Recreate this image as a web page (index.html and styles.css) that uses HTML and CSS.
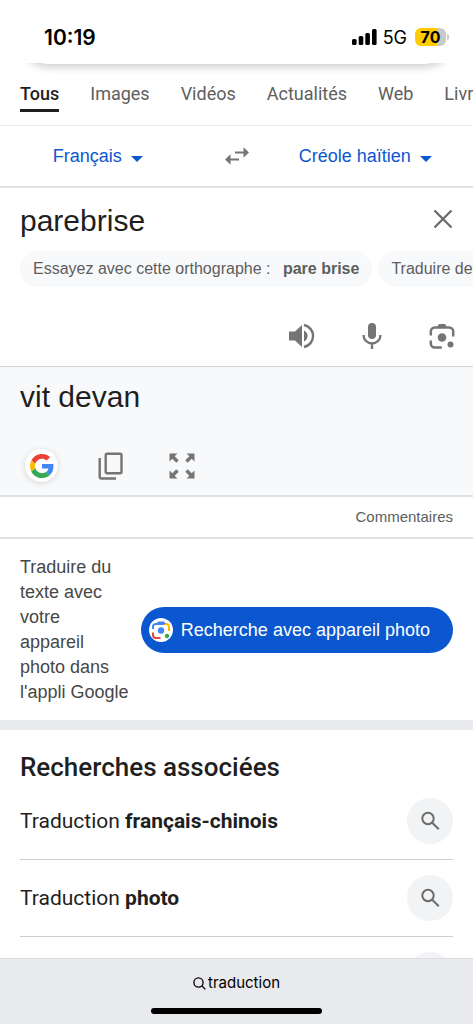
FILE: index.html
```html
<!DOCTYPE html>
<html lang="fr">
<head>
<meta charset="utf-8">
<meta name="viewport" content="width=device-width, initial-scale=1">
<title>traduction</title>
<link rel="stylesheet" href="styles.css">
</head>
<body>
<div class="screen">
  <header class="status">
    <time class="clock">10:19</time>
    <div class="indicators">
      <svg class="signal" viewBox="0 0 25 16" width="25" height="16" aria-hidden="true"><rect x="0" y="10" width="4.600" height="6" rx="1.5"/><rect x="6.7" y="7" width="4.6" height="9" rx="1.5"/><rect x="13.3" y="4" width="4.6" height="12" rx="1.5"/><rect x="20" y="0" width="4.6" height="16" rx="1.5"/></svg>
      <span class="network">5G</span>
      <span class="battery">70</span>
      <span class="battery-tip"></span>
    </div>
  </header>

  <div class="tabs-area">
    <div class="search-edge"></div>
    <nav class="tabs">
      <a class="tab active" href="#">Tous</a>
      <a class="tab" href="#">Images</a>
      <a class="tab" href="#">Vidéos</a>
      <a class="tab" href="#">Actualités</a>
      <a class="tab" href="#">Web</a>
      <a class="tab" href="#">Livres</a>
    </nav>
  </div>

  <main>
    <section class="languages">
      <div class="language">
        <select class="language-select" aria-label="Langue source"><option>Français</option></select>
        <svg viewBox="0 0 12 6" width="12" height="6" aria-hidden="true"><path d="M0 0h12L6 6z"/></svg>
      </div>
      <button class="icon-button" aria-label="Inverser les langues">
        <svg viewBox="0 0 26 20" width="26" height="20" aria-hidden="true"><path d="M11 5.400h8.500V1.200L25 6.500l-5.500 5.300V7.600H11zM15 12.400H6.500V8.200L1 13.500l5.500 5.300v-4.200H15z"/></svg>
      </button>
      <div class="language target-language">
        <select class="language-select" aria-label="Langue cible"><option>Créole haïtien</option></select>
        <svg viewBox="0 0 12 6" width="12" height="6" aria-hidden="true"><path d="M0 0h12L6 6z"/></svg>
      </div>
    </section>

    <section class="source">
      <div class="source-row">
        <input class="source-text" type="text" value="parebrise" aria-label="Texte à traduire">
        <button class="icon-button clear" aria-label="Effacer">
          <svg viewBox="0 0 20 20" width="20" height="20" aria-hidden="true"><path d="M1.500 1.500l17 17M18.500 1.500l-17 17" fill="none" stroke="#6b6b6b" stroke-width="2.300"/></svg>
        </button>
      </div>
      <div class="chips">
        <button class="chip">Essayez avec cette orthographe : <b>pare brise</b></button>
        <button class="chip">Traduire depuis</button>
      </div>
      <div class="source-tools">
        <button class="icon-button" aria-label="Écouter">
          <svg viewBox="0 0 26 26" width="26" height="26" aria-hidden="true"><path d="M0 8.500h6L13 2v22l-7-6.500H0z"/><path d="M15 7.500a6 6 0 0 1 0 11z"/><path d="M15 2a11.200 11.200 0 0 1 0 22" fill="none" stroke="#757575" stroke-width="2.400"/></svg>
        </button>
        <button class="icon-button" aria-label="Saisie vocale">
          <svg viewBox="0 0 26 26" width="26" height="26" aria-hidden="true"><rect x="9" y="0" width="8" height="16" rx="4"/><path d="M4.500 12a8.500 8.500 0 0 0 17 0M13 20.500V26" fill="none" stroke="#757575" stroke-width="2.300"/></svg>
        </button>
        <button class="icon-button" aria-label="Recherche par image">
          <svg viewBox="0 0 26 26" width="26" height="26" aria-hidden="true"><path d="M1.800 12.500V8.500a4 4 0 0 1 4-4h14.400a4 4 0 0 1 4 4v5M1.800 17.500V20.500a4 4 0 0 0 4 4h7" fill="none" stroke="#757575" stroke-width="2.500"/><path d="M8 4l2-3h6l2 3z"/><circle cx="13" cy="14.500" r="4.300"/><circle cx="21.500" cy="21.500" r="3"/></svg>
        </button>
      </div>
    </section>

    <section class="result">
      <p class="result-text">vit devan</p>
      <div class="result-tools">
        <button class="google-button" aria-label="Google">
          <svg viewBox="0 0 48 48" width="24" height="24" aria-hidden="true"><path fill="#ea4335" d="M24 9.500c3.540 0 6.710 1.220 9.210 3.600l6.850-6.850C35.900 2.380 30.470 0 24 0 14.620 0 6.510 5.380 2.560 13.220l7.980 6.190C12.430 13.720 17.740 9.500 24 9.500z"/><path fill="#4285f4" d="M46.980 24.550c0-1.570-.15-3.090-.38-4.550H24v9.020h12.940c-.58 2.960-2.260 5.480-4.780 7.180l7.730 6c4.510-4.180 7.090-10.360 7.090-17.650z"/><path fill="#fbbc05" d="M10.530 28.590A14.500 14.500 0 0 1 9.770 24c0-1.600.27-3.140.76-4.590l-7.980-6.190A23.900 23.900 0 0 0 0 24c0 3.880.92 7.540 2.560 10.780z"/><path fill="#34a853" d="M24 48c6.480 0 11.930-2.130 15.890-5.810l-7.730-6c-2.150 1.450-4.920 2.300-8.160 2.300-6.260 0-11.570-4.220-13.470-9.910l-7.980 6.190C6.510 42.620 14.620 48 24 48z"/></svg>
        </button>
        <button class="icon-button" aria-label="Copier">
          <svg viewBox="0 0 26 28" width="26" height="28" aria-hidden="true"><g fill="none" stroke="#757575" stroke-width="2.400"><rect x="7.700" y="1.700" width="15.800" height="19.600" rx="1.500"/><path d="M1.700 6v19a1.500 1.500 0 0 0 1.500 1.500H18"/></g></svg>
        </button>
        <button class="icon-button" aria-label="Plein écran">
          <svg viewBox="0 0 26 26" width="26" height="26" aria-hidden="true"><path d="M.5.500h8L5.700 3.300l4 4-2.400 2.400-4-4L.5 8.500zM25.500.500h-8l2.800 2.800-4 4 2.400 2.400 4-4 2.800 2.800zM.5 25.500h8l-2.800-2.800 4-4-2.400-2.400-4 4-2.800-2.800zM25.500 25.500h-8l2.800-2.800-4-4 2.400-2.400 4 4 2.800-2.800z"/></svg>
        </button>
      </div>
    </section>

    <div class="feedback"><a href="#">Commentaires</a></div>

    <section class="camera">
      <p class="camera-text">Traduire du<br>texte avec<br>votre<br>appareil<br>photo dans<br>l'appli Google</p>
      <button class="camera-button">
        <svg viewBox="0 0 24 24" width="24" height="24" aria-hidden="true"><circle cx="12" cy="12" r="12" fill="#fff"/><g fill="none" stroke-width="2"><path d="M4 11V9a3 3 0 0 1 3-3h8" stroke="#4285f4"/><path d="M15 6h2a3 3 0 0 1 3 3v4" stroke="#fbbc04"/><path d="M4 14.500V17a3 3 0 0 0 3 3h4.500" stroke="#ea4335"/></g><path d="M7 6l2-2.500h6L17 6z" fill="#4285f4"/><circle cx="12" cy="12.500" r="3.200" fill="#4285f4"/><circle cx="18" cy="18" r="2.200" fill="#34a853"/></svg>
        <span>Recherche avec appareil photo</span>
      </button>
    </section>

    <section class="related">
      <h2 class="related-title">Recherches associées</h2>
      <a class="related-item" href="#">
        <span>Traduction <b>français-chinois</b></span>
        <span class="round"><svg viewBox="0 0 20 20" width="20" height="20" aria-hidden="true"><circle cx="8" cy="7.500" r="5.700"/><path d="M12.200 11.700l6.600 6.600"/></svg></span>
      </a>
      <a class="related-item" href="#">
        <span>Traduction <b>photo</b></span>
        <span class="round"><svg viewBox="0 0 20 20" width="20" height="20" aria-hidden="true"><circle cx="8" cy="7.500" r="5.700"/><path d="M12.200 11.700l6.600 6.600"/></svg></span>
      </a>
      <div class="related-item"><span></span><span class="round"></span></div>
    </section>
  </main>

  <footer class="browser-bar">
    <button class="address">
      <svg viewBox="0 0 13 13" width="13" height="13" aria-hidden="true"><circle cx="5.500" cy="5.500" r="4.600"/><path d="M8.800 8.800l3.600 3.600"/></svg>
      <span>traduction</span>
    </button>
    <div class="home-indicator"></div>
  </footer>
</div>
</body>
</html>
```
FILE: styles.css
```css
* { box-sizing: border-box; }
body {
  margin: 0;
  background: #fff;
  color: #1f1f1f;
  font-family: "Liberation Sans", Arial, sans-serif;
}
p, h2 { margin: 0; }
a { color: inherit; text-decoration: none; }
button, input, select {
  margin: 0;
  padding: 0;
  border: 0;
  background: none;
  color: inherit;
  font: inherit;
}
svg { display: block; flex: none; }
.screen {
  display: flex;
  flex-direction: column;
  height: 100vh;
  overflow: hidden;
}
main { flex: 1; min-height: 0; overflow: hidden; }

.status {
  position: relative;
  z-index: 2;
  flex: none;
  display: flex;
  align-items: center;
  justify-content: space-between;
  height: 63px;
  padding: 11px 24px 0 44px;
  background: #fff;
  color: #000;
  font-family: Inter, sans-serif;
}
.clock { font-size: 21px; font-weight: 600; }
.indicators { display: flex; align-items: center; }
.network { margin: 0 8px 0 6px; font-size: 18px; }
.battery {
  width: 31px;
  border-radius: 6px;
  background: linear-gradient(90deg, #ffcc00 70%, #c9c9c9 70%);
  font-size: 16px;
  font-weight: 700;
  line-height: 18px;
  text-align: center;
}
.battery-tip {
  width: 2px;
  height: 6px;
  margin-left: 1px;
  border-radius: 0 2px 2px 0;
  background: #c9c9c9;
}

.tabs-area {
  position: relative;
  flex: none;
  border-bottom: 1px solid #ebebeb;
}
.search-edge {
  position: absolute;
  top: -55px;
  left: 20px;
  right: 20px;
  height: 56px;
  border-radius: 28px;
  background: #fff;
  box-shadow: 0 3px 9px rgba(0, 0, 0, 0.2);
}
.tabs {
  position: relative;
  display: flex;
  gap: 31px;
  padding: 18px 0 13px 20px;
  overflow: hidden;
  color: #5e5e5e;
  font-family: Roboto, sans-serif;
  font-size: 18px;
  line-height: 26px;
}
.tab { flex: none; padding-bottom: 5px; }
.tab.active {
  padding-bottom: 2px;
  border-bottom: 3px solid #1f1f1f;
  color: #1f1f1f;
  font-weight: 500;
}

.languages {
  display: grid;
  grid-template-columns: 1fr 82px 1fr;
  align-items: center;
  height: 62px;
  border-bottom: 2px solid #dfe1e5;
  color: #0b57d0;
  fill: #0b57d0;
  font-size: 18px;
}
.language {
  display: flex;
  align-items: center;
  justify-content: center;
  gap: 8px;
}
.target-language { padding-right: 20px; }
.language svg { margin-top: 5px; }
.language-select { appearance: none; line-height: 24px; }
.icon-button {
  display: flex;
  align-items: center;
  justify-content: center;
  fill: #757575;
}

.source { border-bottom: 1px solid #d2d5dc; }
.source-row {
  display: flex;
  align-items: center;
  padding: 13px 20px 10px;
}
.source-text {
  flex: 1;
  min-width: 0;
  height: 40px;
  outline: 0;
  font-size: 30px;
}
.clear { padding-bottom: 4px; }
.chips { display: flex; gap: 6px; padding-left: 20px; overflow: hidden; }
.chip {
  flex: none;
  padding: 0 13px;
  border-radius: 18px;
  background: #f8f9fb;
  color: #5e5e5e;
  font-size: 16px;
  line-height: 36px;
}
.chip b { margin-left: 8px; }
.source-tools {
  display: flex;
  justify-content: flex-end;
  gap: 44px;
  padding: 36px 18px 17px;
}

.result {
  padding: 10px 20px 13px;
  border-bottom: 2px solid #dfe1e5;
  background: #f8f9fb;
}
.result-text { font-size: 30px; line-height: 40px; }
.result-tools {
  display: flex;
  align-items: center;
  padding: 32px 0 0 5px;
}
.google-button {
  display: flex;
  align-items: center;
  justify-content: center;
  width: 33px;
  height: 33px;
  border-radius: 50%;
  background: #fff;
  box-shadow: 0 1px 6px rgba(0, 0, 0, 0.15);
}
.result-tools .icon-button { margin-left: 40px; }
.result-tools .icon-button + .icon-button { margin-left: 45px; }

.feedback {
  padding-right: 20px;
  border-bottom: 2px solid #dfe1e5;
  color: #5e5e5e;
  font-size: 15px;
  line-height: 40px;
  text-align: right;
}
.camera {
  display: flex;
  align-items: center;
  gap: 2px;
  padding: 16px 20px 15px;
  border-bottom: 10px solid #e8eaed;
}
.camera-text {
  flex: 1;
  color: #474747;
  font-size: 18px;
  line-height: 25px;
}
.camera-button {
  display: flex;
  flex: none;
  align-items: center;
  gap: 8px;
  height: 46px;
  padding: 0 23px 0 8px;
  border-radius: 23px;
  background: #0b57d0;
  color: #fff;
  font-size: 18px;
}

.related { padding: 0 20px; font-family: Roboto, sans-serif; }
.related-title {
  padding: 21px 0 15px;
  font-size: 26px;
  font-weight: 500;
  line-height: 32px;
}
.related-item {
  display: flex;
  align-items: center;
  justify-content: space-between;
  height: 62px;
  margin-bottom: 15px;
  padding-bottom: 16px;
  border-bottom: 1px solid #cfcfcf;
  font-size: 21px;
}
.related-item b { font-weight: 700; }
.round {
  display: flex;
  flex: none;
  align-items: center;
  justify-content: center;
  width: 46px;
  height: 46px;
  border-radius: 50%;
  background: #f1f3f4;
}
.round svg { fill: none; stroke: #6b6b6b; stroke-width: 2; }

.browser-bar {
  flex: none;
  display: flex;
  flex-direction: column;
  align-items: center;
  padding: 12px 0 10px;
  border-top: 1px solid #dcdde0;
  background: #e9eaed;
  color: #000;
  font-family: Inter, sans-serif;
}
.address {
  display: flex;
  align-items: center;
  gap: 2px;
  font-size: 15px;
  line-height: 24px;
}
.address svg { fill: none; stroke: #000; stroke-width: 1.3; }
.home-indicator {
  width: 36%;
  height: 6px;
  margin-top: 13px;
  border-radius: 3px;
  background: #000;
}
```
